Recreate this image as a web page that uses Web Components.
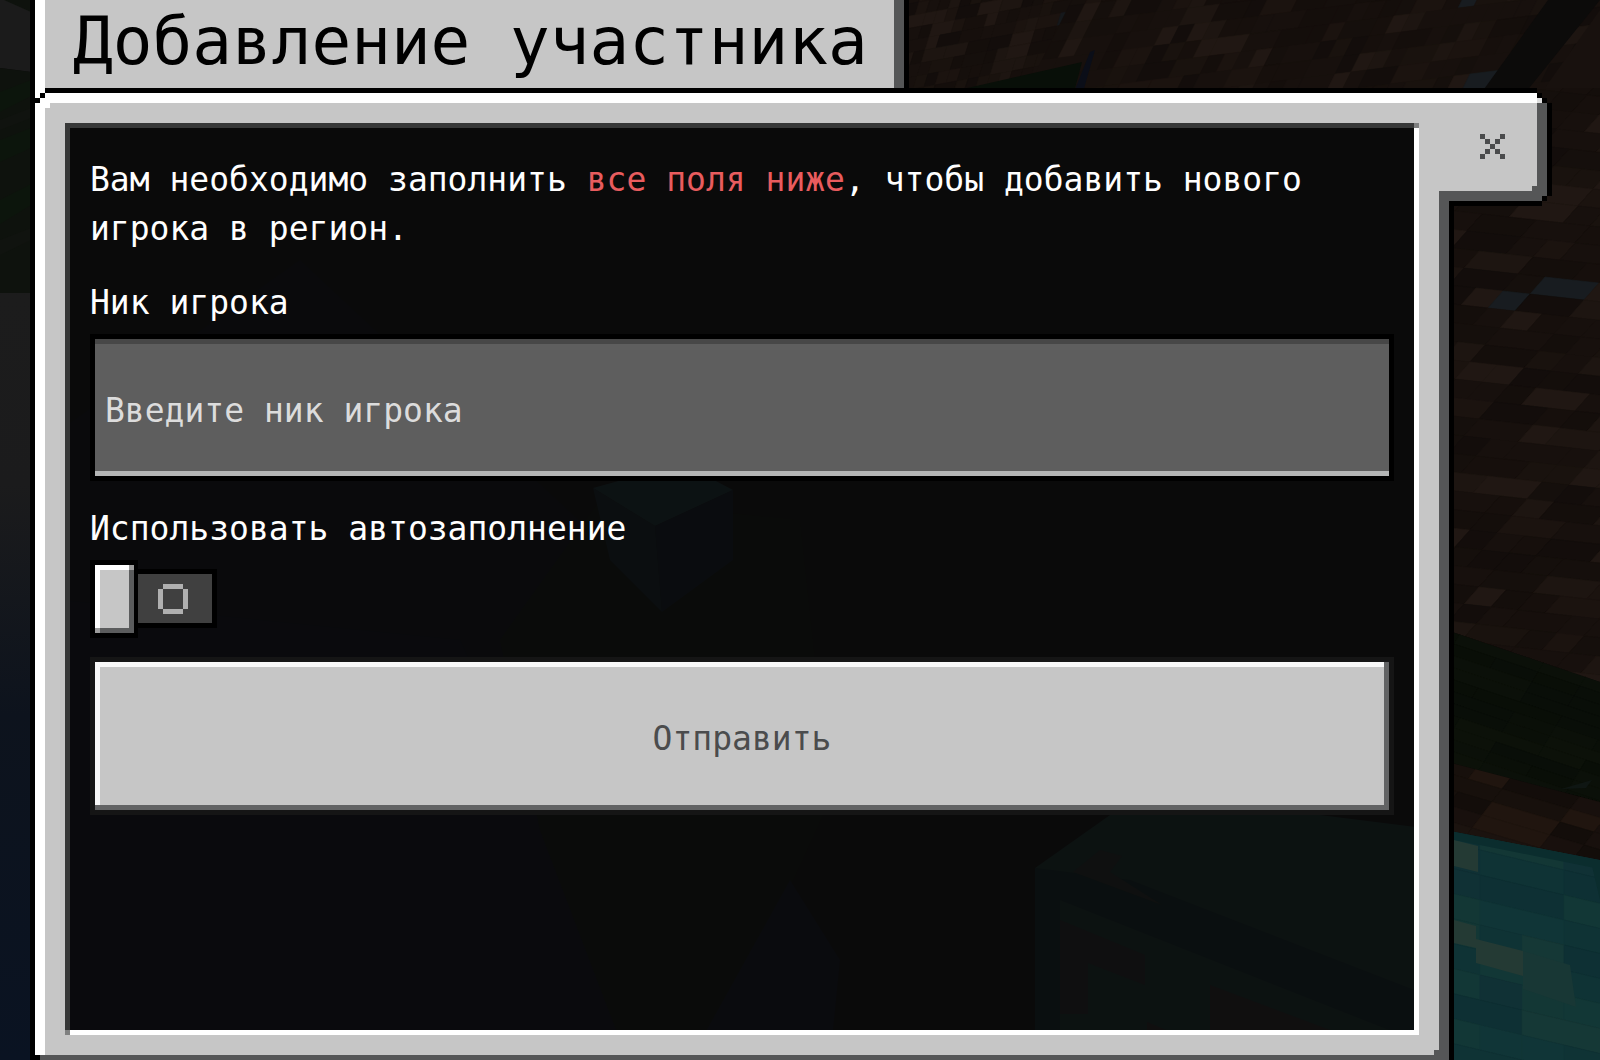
<!DOCTYPE html>
<html lang="ru">
<head>
<meta charset="utf-8">
<meta name="viewport" content="width=device-width, initial-scale=1">
<title>Добавление участника</title>
<style>
  html, body { margin: 0; height: 100%; background: #0c0a09; }
</style>
</head>
<body>
<game-screen>
  <world-scene slot="scene"></world-scene>
  <game-dialog>
    <span slot="title">Добавление участника</span>
    <dialog-text>Вам необходимо заполнить <strong>все поля ниже</strong>, чтобы добавить нового <wbr>игрока в регион.</dialog-text>
    <text-field label="Ник игрока" placeholder="Введите ник игрока"></text-field>
    <toggle-field label="Использовать автозаполнение"></toggle-field>
    <submit-button>Отправить</submit-button>
  </game-dialog>
</game-screen>

<script>
const define = (name, markup, setup) => {
  const template = document.createElement('template');
  template.innerHTML = markup;
  customElements.define(name, class extends HTMLElement {
    constructor() {
      super();
      this.attachShadow({ mode: 'open' }).append(template.content.cloneNode(true));
    }
    connectedCallback() { if (setup) setup(this, this.shadowRoot); }
  });
};

define('game-screen', `
  <style>
    :host {
      display: flex; flex-direction: column; position: relative; isolation: isolate;
      box-sizing: border-box; min-height: 100vh; padding: 0 48px 0 30px; overflow: hidden;
      font: 33px/49px "DejaVu Sans Mono", "Liberation Mono", monospace; color: #fff;
    }
    ::slotted([slot="scene"]) { position: absolute; inset: 0; z-index: -1; }
  </style>
  <slot name="scene"></slot>
  <slot></slot>`);

/* Dimmed block world behind the dialog */
define('world-scene', `
  <style>
    :host { display: block; }
    svg { display: block; width: 100%; height: 100%; }
  </style>
  <svg viewBox="0 0 1600 1060" preserveAspectRatio="xMidYMid slice" aria-hidden="true"></svg>`,
(host, root) => {
  let seed = 41;
  const rnd = () => (seed = (seed * 16807) % 2147483647) / 2147483647;
  const earth = ['#17100d', '#150f0c', '#19120e', '#130d0b', '#17100d', '#1d1511', '#140e0b', '#160f0c', '#1b130f', '#201713'];
  const gem = ['#0f3335', '#0f3335', '#103537', '#123736', '#103135', '#133735', '#0e3034', '#153836'];
  const leaf = ['#0a0f08', '#090e07', '#0b1009', '#090e08', '#0c1109'];
  const tiles = (ox, oy, ux, uy, vx, vy, cols, rows, palette, rare) => {
    let out = '';
    for (let r = 0; r < rows; r++) {
      let c = -2;
      while (c < cols) {
        const n = rnd() > .7 ? 2 : 1;
        const x = Math.round(ox + c * ux + r * vx), y = Math.round(oy + c * uy + r * vy);
        const fill = rare && rnd() < .02 ? rare : palette[Math.floor(rnd() * palette.length)];
        out += `<path fill="${fill}" stroke="${fill}" stroke-width=".6" d="M${x} ${y}l${ux * n} ${uy * n} ${vx} ${vy} ${-ux * n} ${-uy * n}z"/>`;
        c += n;
      }
    }
    return out;
  };
  root.querySelector('svg').innerHTML = `
    <defs>
      <linearGradient id="dusk" x1="0" y1="0" x2="0" y2="1">
        <stop offset="0" stop-color="#1c1c1c"/><stop offset=".25" stop-color="#1b1b1c"/>
        <stop offset=".55" stop-color="#0d131d"/><stop offset="1" stop-color="#0a1322"/>
      </linearGradient>
      <clipPath id="top"><path d="M900 0H1600V92H900z"/></clipPath>
      <clipPath id="side"><path d="M1440 88H1600V682L1440 628z"/></clipPath>
      <clipPath id="grass"><path d="M1440 628L1600 682V802L1440 760z"/></clipPath>
      <clipPath id="ledge"><path d="M1440 760L1600 802V860L1440 829z"/></clipPath>
      <clipPath id="gem"><path d="M1440 829L1600 860V1060H1440z"/></clipPath>
    </defs>
    <path fill="#0c0b0b" d="M0 0H1600V1060H0z"/>
    <path fill="#1b1b1b" d="M0 0H31V72L0 68z"/>
    <path fill="#0e120d" d="M4 0H31V12zM0 68L31 72V293H0z"/>
    <g opacity=".4">
      <path fill="#0b1a0b" d="M0 92L31 80V96L0 112zM0 140L31 128V148L0 162zM0 200L31 184V205L0 224z"/>
      <path fill="#141512" d="M0 120L31 108V118L0 130zM0 240L31 228V240L0 255z"/>
    </g>
    <path fill="url(#dusk)" d="M0 293H31V1060H0z"/>
    <path fill="#0a0e17" d="M60 430L300 260 600 540 430 800 640 1060H60z"/>
    <path fill="#0a0e1b" d="M60 600L460 640 560 860 640 1060H60z"/>
    <path fill="#0c110a" d="M500 640L600 500 800 520 830 800 720 1040H620L540 830z"/>
    <path fill="#0b1020" d="M690 1060L790 880 840 960 830 1060z"/>
    <path fill="#18333a" d="M593 488L622 480H714L733 490 655 526z"/>
    <path fill="#10212a" d="M593 488L655 526 662 612 610 560z"/>
    <path fill="#0d1726" d="M655 526L733 490 733 560 662 612z"/>
    <path fill="#16322f" d="M1035 868L1110 815H1320L1440 830V1060H1035z"/>
    <path fill="#0b2428" d="M1035 868V1060H1060V900L1440 1050V1000L1130 880z"/>
    <path fill="#242a28" d="M1073 872L1100 850 1122 856 1110 872 1162 905 1100 882z"/>
    <path fill="#262528" d="M1060 920L1145 955V985L1088 963V1014H1060z"/>
    <path fill="#2a2626" d="M1210 985L1330 1030V1060L1290 1040 1210 1045zM1147 1022L1180 1036V1060H1147z"/>
    <g clip-path="url(#top)">
      ${tiles(905, -20, 11, -2, -4, 13, 20, 10, earth, '#15181b')}
      <path fill="#17100d" d="M1090 0H1600V92H1068z"/>
      ${tiles(1110, -16, 16, -2, -9, 18, 36, 9, earth, '#181c20')}
      <path fill="#080f08" d="M950 92L1082 62 1074 92z"/>
      <path fill="#0b0e18" d="M1090 52L1095 50 1083 92H1074z"/>
      <path fill="#0c0b0a" d="M1548 0H1600L1526 92H1482z"/>
      <path fill="#18110e" d="M1600 10V92H1542z"/>
    </g>
    <g clip-path="url(#side)">${tiles(1440, 60, 27, 3, -15, 17, 40, 40, earth, '#181c20')}</g>
    <g clip-path="url(#grass)">${tiles(1430, 600, 42, 14, -6, 10, 6, 26, leaf)}
      <path fill="#0f1613" d="M1561 789L1592 780 1586 788z"/></g>
    <g clip-path="url(#ledge)">${tiles(1430, 720, 34, 10, -10, 13, 8, 12, ['#17100c', '#130d0a', '#1b130f', '#20150f', '#18100d'], '#191a20')}</g>
    <g clip-path="url(#gem)">
      ${tiles(1438, 790, 42, 10, 0, 25, 5, 12, gem)}
      <path fill="#243a34" d="M1454 840L1478 846V872L1454 866zM1454 920L1476 926V948L1454 943zM1476 939L1523 951V976L1476 963z"/>
      <path fill="#183735" d="M1523 951L1570 965 1576 1007 1523 989z"/>
      <path fill="#0b2d2e" d="M1440 829L1600 860V869L1440 837zM1592 866L1600 868V900z"/>
    </g>`;
});

/* Window frame: title tab, bevelled body and the close tab on the side */
define('game-dialog', `
  <style>
    :host { display: flex; flex-direction: column; flex: 1; }
    * { box-sizing: border-box; }
    h1 {
      margin: 0; width: fit-content; padding: 0 41px 4px 43px;
      font-size: 66px; line-height: 84px; font-weight: 400; color: #000; white-space: nowrap;
      background:
        linear-gradient(#000 0 0) 0 0 / 5px 100% no-repeat,
        linear-gradient(#fff 0 0) 5px 0 / 10px 100% no-repeat,
        linear-gradient(#000 0 0) 100% 0 / 5px 100% no-repeat,
        linear-gradient(#555657 0 0) right 5px top 0 / 10px 100% no-repeat,
        #c6c6c6;
    }
    .row { display: flex; flex: 1; align-items: flex-start; }
    .frame {
      flex: 1; align-self: stretch; display: flex; padding: 35px 35px 25px;
      background:
        linear-gradient(#000 0 0) 0 0 / 5px 100% no-repeat,
        linear-gradient(#fff 0 0) 5px 0 / 10px 5px no-repeat,
        linear-gradient(#fff 0 0) 5px 5px / 5px 5px no-repeat,
        linear-gradient(#000 0 0) 10px 5px / 5px 5px no-repeat,
        linear-gradient(#000 0 0) 5px 10px / 5px 5px no-repeat,
        linear-gradient(#000 0 0) 15px 0 / 100% 5px no-repeat,
        linear-gradient(#fff 0 0) 15px 5px / 100% 10px no-repeat,
        linear-gradient(#fff 0 0) 15px 15px / 5px 5px no-repeat,
        linear-gradient(#000 0 0) 100% 0 / 5px 100% no-repeat,
        linear-gradient(#555657 0 0) right 5px top 0 / 10px 100% no-repeat,
        linear-gradient(#000 0 0) left 5px bottom 0 / 5px 5px no-repeat,
        linear-gradient(#555657 0 0) 10px 100% / 100% 5px no-repeat,
        linear-gradient(#555657 0 0) right 15px bottom 5px / 5px 5px no-repeat,
        linear-gradient(#fff 0 0) 5px 0 / 10px 100% no-repeat,
        linear-gradient(#c6c6c6 0 0) 15px 0 / 20px 100% no-repeat,
        linear-gradient(#c6c6c6 0 0) 100% 0 / 35px 100% no-repeat,
        linear-gradient(#c6c6c6 0 0) 0 0 / 100% 35px no-repeat,
        linear-gradient(#c6c6c6 0 0) 0 100% / 100% 25px no-repeat;
    }
    .body {
      flex: 1; min-width: 0; padding: 32px 25px 25px;
      background:
        linear-gradient(#7f8080 0 0) 100% 0 / 5px 5px no-repeat,
        linear-gradient(#7f8080 0 0) 0 100% / 5px 5px no-repeat,
        linear-gradient(#373838 0 0) 0 0 / 100% 5px no-repeat,
        linear-gradient(#373838 0 0) 0 0 / 5px 100% no-repeat,
        linear-gradient(#fff 0 0) 100% 0 / 5px 100% no-repeat,
        linear-gradient(#fff 0 0) 0 100% / 100% 5px no-repeat,
        rgba(10, 10, 10, .8);
    }
    button {
      flex: none; width: 113px; height: 118px; margin: 0 0 0 -15px; padding: 0 47px 47px 41px;
      border: 0; display: flex; align-items: flex-end; justify-content: flex-start; cursor: pointer;
      background:
        linear-gradient(#000 0 0) 0 0 / 98px 5px no-repeat,
        linear-gradient(#000 0 0) 98px 5px / 5px 5px no-repeat,
        linear-gradient(#000 0 0) 103px 10px / 5px 5px no-repeat,
        linear-gradient(#000 0 0) 108px 15px / 5px 93px no-repeat,
        linear-gradient(#000 0 0) 103px 108px / 5px 5px no-repeat,
        linear-gradient(#000 0 0) 10px 113px / 93px 5px no-repeat,
        linear-gradient(#555657 0 0) 0 113px / 10px 5px no-repeat,
        linear-gradient(#fff 0 0) 0 5px / 98px 10px no-repeat,
        linear-gradient(#dedede 0 0) 98px 10px / 5px 5px no-repeat,
        linear-gradient(#555657 0 0) 98px 15px / 10px 93px no-repeat,
        linear-gradient(#555657 0 0) 0 103px / 103px 10px no-repeat,
        linear-gradient(#555657 0 0) 93px 98px / 5px 5px no-repeat,
        linear-gradient(#c6c6c6 0 0) 0 15px / 98px 88px no-repeat;
    }
    svg { display: block; width: 25px; height: 25px; flex: none; }
  </style>
  <h1><slot name="title"></slot></h1>
  <div class="row">
    <div class="frame"><div class="body"><slot></slot></div></div>
    <button type="button" aria-label="Закрыть">
      <svg viewBox="0 0 5 5" shape-rendering="crispEdges" fill="#4a4b4c" aria-hidden="true">
        <path d="M0 0h1v1H0zM4 0h1v1H4zM1 1h1v1H1zM3 1h1v1H3zM2 2h1v1H2zM1 3h1v1H1zM3 3h1v1H3zM0 4h1v1H0zM4 4h1v1H4z"/>
      </svg>
    </button>
  </div>`);

define('dialog-text', `
  <style>
    :host { display: block; margin-bottom: 25px; }
    p { margin: 0; }
    ::slotted(strong) { font-weight: 400; color: #e85c5e; }
  </style>
  <p><slot></slot></p>`);

define('text-field', `
  <style>
    :host { display: block; margin-bottom: 23px; }
    label { display: block; margin-bottom: 7px; }
    input {
      display: block; box-sizing: border-box; width: 100%; height: 147px; margin: 0; padding: 5px 10px 0;
      border: 5px solid #000; border-radius: 0; outline: 0; font: inherit; color: #fff;
      background: #5e5e5e; box-shadow: inset 0 5px #474747, inset 0 -5px #b4b5b5;
    }
    input::placeholder { color: #dcdcdc; opacity: 1; }
  </style>
  <label for="field"></label>
  <input id="field" type="text">`,
(host, root) => {
  root.querySelector('label').textContent = host.getAttribute('label');
  root.querySelector('input').placeholder = host.getAttribute('placeholder');
});

define('toggle-field', `
  <style>
    :host { display: block; margin-bottom: 19px; }
    label { display: block; margin-bottom: 7px; }
    .switch { display: grid; width: 127px; height: 78px; }
    input, svg { grid-area: 1 / 1; }
    input {
      appearance: none; margin: 0; width: 100%; height: 100%; cursor: pointer;
      background:
        linear-gradient(#9b9b9b 0 0) 39px 5px / 5px 5px no-repeat,
        linear-gradient(#9b9b9b 0 0) 5px 68px / 5px 5px no-repeat,
        linear-gradient(#fff 0 0) 5px 5px / 34px 5px no-repeat,
        linear-gradient(#fff 0 0) 5px 5px / 5px 63px no-repeat,
        linear-gradient(#5b5c5d 0 0) 39px 5px / 5px 68px no-repeat,
        linear-gradient(#5b5c5d 0 0) 5px 68px / 39px 5px no-repeat,
        linear-gradient(#c6c6c6 0 0) 5px 5px / 39px 68px no-repeat,
        linear-gradient(#000 0 0) 0 0 / 48px 78px no-repeat,
        linear-gradient(#404040 0 0) 48px 14px / 74px 49px no-repeat,
        linear-gradient(#000 0 0) 43px 9px / 84px 59px no-repeat;
    }
    svg { width: 30px; height: 30px; margin: 24px 0 0 68px; pointer-events: none; }
  </style>
  <label for="toggle"></label>
  <div class="switch">
    <input id="toggle" type="checkbox" role="switch">
    <svg viewBox="0 0 6 6" shape-rendering="crispEdges" fill="#b0b0b0" aria-hidden="true">
      <path d="M1 0h4v1H1zM0 1h1v4H0zM5 1h1v4H5zM1 5h4v1H1z"/>
    </svg>
  </div>`,
(host, root) => { root.querySelector('label').textContent = host.getAttribute('label'); });

define('submit-button', `
  <style>
    :host { display: block; }
    button {
      display: block; box-sizing: border-box; width: 100%; height: 158px; margin: 0; padding: 5px 0 0;
      border: 5px solid #151515; border-radius: 0; font: inherit; color: #4b4c4d; cursor: pointer;
      background: #c6c6c6;
      box-shadow: inset -5px 0 #626364, inset 0 -5px #626364, inset 5px 0 #f8f8f8, inset 0 5px #f8f8f8;
    }
  </style>
  <button type="submit"><slot></slot></button>`);
</script>
</body>
</html>
